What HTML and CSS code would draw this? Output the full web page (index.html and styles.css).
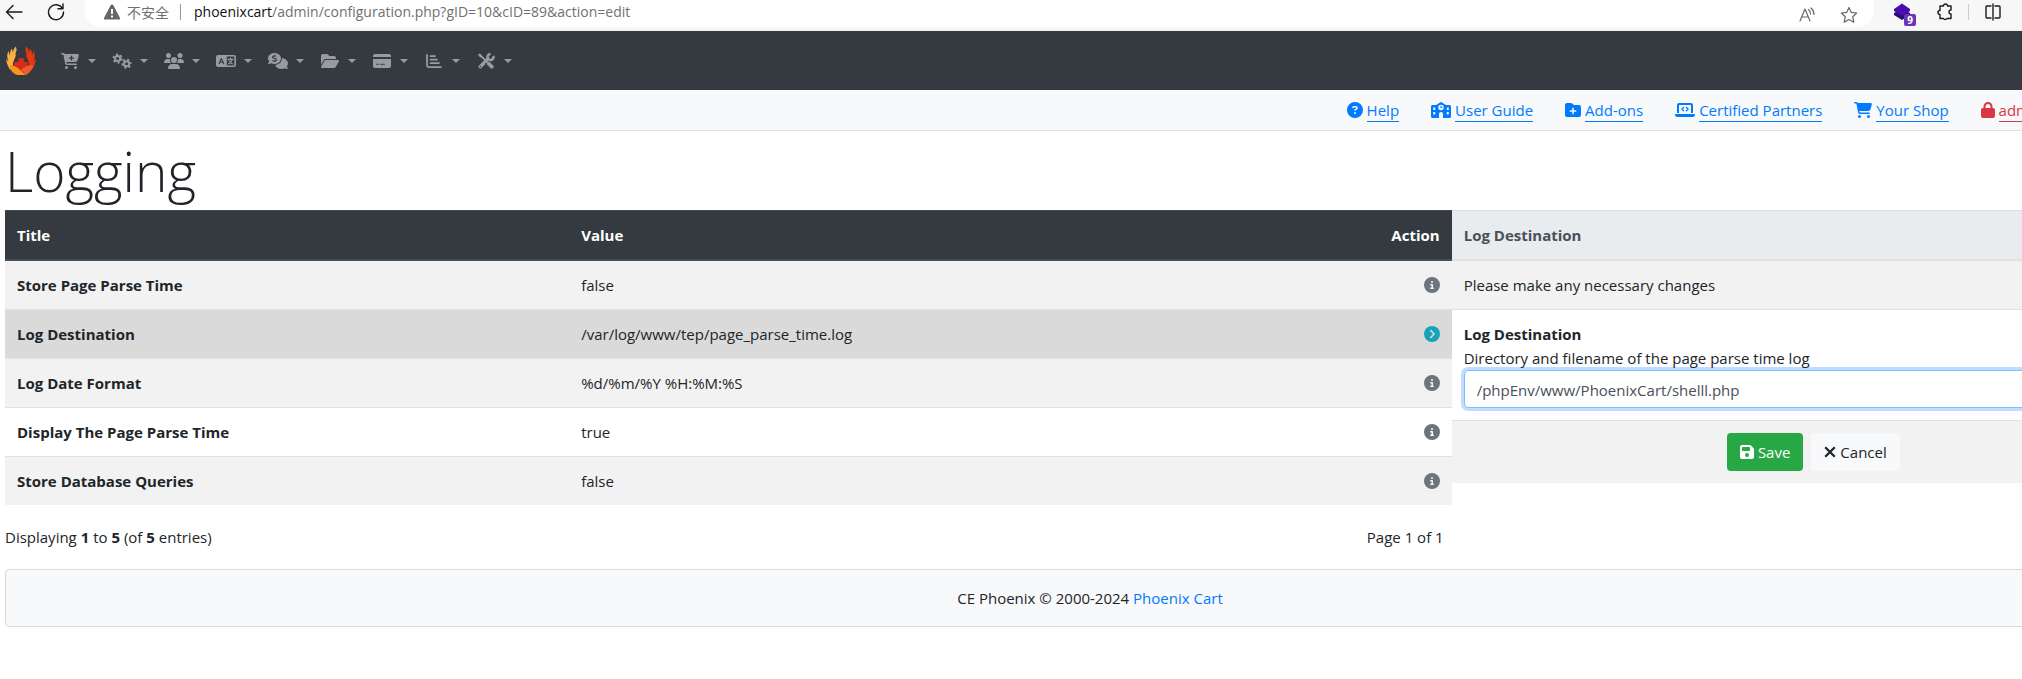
FILE: index.html
```
<!DOCTYPE html>
<html lang="en">
<head>
<meta charset="utf-8">
<title>Logging</title>
<link rel="stylesheet" href="styles.css">
</head>
<body>
<svg class="sprite" aria-hidden="true">
  <symbol id="cart" viewBox="0 0 576 512"><path d="M0 24C0 10.7 10.7 0 24 0H69.5c22 0 41.5 12.8 50.6 32h411c26.300 0 45.500 25 38.600 50.400l-41 152.300c-8.500 31.400-37 53.300-69.500 53.300H170.700l5.400 28.500c2.200 11.300 12.100 19.500 23.600 19.500H488c13.300 0 24 10.700 24 24s-10.700 24-24 24H199.700c-34.600 0-64.300-24.600-70.700-58.500L77.400 54.500c-.7-3.800-4-6.500-7.900-6.500H24C10.700 48 0 37.300 0 24zM128 464a48 48 0 1 1 96 0 48 48 0 1 1-96 0zm336-48a48 48 0 1 1 0 96 48 48 0 1 1 0-96z"/></symbol>
  <symbol id="cart-plus" viewBox="0 0 576 512"><path fill-rule="evenodd" d="M0 24C0 10.7 10.7 0 24 0H69.500c22 0 41.500 12.800 50.600 32h411c26.300 0 45.500 25 38.600 50.400l-41 152.300c-8.500 31.400-37 53.300-69.500 53.300H170.700l5.400 28.500c2.200 11.300 12.100 19.500 23.600 19.500H488c13.300 0 24 10.700 24 24s-10.700 24-24 24H199.700c-34.600 0-64.300-24.600-70.700-58.500L77.400 54.500c-.7-3.800-4-6.500-7.900-6.500H24C10.700 48 0 37.300 0 24zM128 464a48 48 0 1 1 96 0 48 48 0 1 1-96 0zm336-48a48 48 0 1 1 0 96 48 48 0 1 1 0-96zM252 160c0 11 9 20 20 20h44v44c0 11 9 20 20 20s20-9 20-20V180h44c11 0 20-9 20-20s-9-20-20-20H356V96c0-11-9-20-20-20s-20 9-20 20v44H272c-11 0-20 9-20 20z"/></symbol>
  <symbol id="gears" viewBox="0 0 640 512">
    <g fill="none" stroke="currentColor"><circle cx="180" cy="176" r="82" stroke-width="64"/><circle cx="180" cy="176" r="136" stroke-width="56" stroke-dasharray="71 71.400"/><circle cx="468" cy="344" r="82" stroke-width="64"/><circle cx="468" cy="344" r="136" stroke-width="56" stroke-dasharray="71 71.400" stroke-dashoffset="70"/></g></symbol>
  <symbol id="users" viewBox="0 0 640 512"><path d="M144 0a80 80 0 1 1 0 160A80 80 0 1 1 144 0zM512 0a80 80 0 1 1 0 160A80 80 0 1 1 512 0zM0 298.700C0 239.800 47.800 192 106.700 192h42.700c15.900 0 31 3.500 44.600 9.700c-1.300 7.200-1.900 14.700-1.900 22.300c0 38.200 16.800 72.500 43.300 96H21.300C9.600 320 0 310.400 0 298.700zM405.300 320c26-23.500 42.700-57.800 42.700-96c0-7.600-.7-15-1.900-22.300c13.600-6.300 28.700-9.700 44.600-9.700h42.700C592.200 192 640 239.800 640 298.700c0 11.800-9.600 21.300-21.300 21.300H405.300zM224 224a96 96 0 1 1 192 0 96 96 0 1 1-192 0zM128 485.300C128 411.700 187.700 352 261.300 352H378.700C452.300 352 512 411.700 512 485.300c0 14.700-11.900 26.700-26.700 26.700H154.700c-14.700 0-26.700-11.900-26.700-26.700z"/></symbol>
  <symbol id="language" viewBox="0 0 640 512"><path fill-rule="evenodd" d="M64 64H576a64 64 0 0 1 64 64V384a64 64 0 0 1-64 64H64a64 64 0 0 1-64-64V128A64 64 0 0 1 64 64zM344 112V400H560a28 28 0 0 0 28-28V140a28 28 0 0 0-28-28z"/><g fill="none" stroke="#343a40" stroke-width="36" stroke-linecap="round" stroke-linejoin="round"><path d="M96 344L172 176L248 344M124 296H220"/></g><g fill="none" stroke="currentColor" stroke-width="36" stroke-linecap="round"><path d="M384 204H548M466 164V204M516 212C500 284 450 328 400 350M420 256C446 306 490 336 532 350"/></g></symbol>
  <symbol id="comments" viewBox="0 0 640 512"><path fill-rule="evenodd" d="M208 0C323 0 416 79 416 176S323 352 208 352c-38 0-74-9-105-24C78 342 48 352 16 352c-14 0-21-16-12-27 18-20 29-43 35-63C14 236 0 207 0 176C0 79 93 0 208 0zM190 54v24c-34 5-58 26-58 56c0 66 116 44 116 84c0 26-50 30-104 6l-12 34c18 8 38 13 58 15v25h36v-25c38-5 62-26 62-59c0-70-116-48-116-82c0-26 48-26 88-10l12-34c-14-5-29-9-46-11V54z"/><path d="M448 176c0 112-99 197-216 208c24 76 106 128 200 128c38 0 74-9 105-24c25 14 55 24 87 24c14 0 21-16 12-27c-18-20-29-43-35-63c25-26 39-55 39-86c0-86-80-158-193-175q1 8 1 15z"/></symbol>
  <symbol id="folder-open" viewBox="0 0 576 512"><path d="M88.700 223.800L0 375.800V96C0 60.700 28.700 32 64 32H181.500c17 0 33.300 6.700 45.300 18.700l26.500 26.500c12 12 28.300 18.700 45.300 18.700H416c35.300 0 64 28.700 64 64v32H144c-22.800 0-43.800 12.100-55.300 31.800zm27.600 16.100C122.100 230 132.600 224 144 224H544c11.500 0 22 6.100 27.700 16.100s5.700 22.200-.1 32.100l-112 192C453.900 474 443.400 480 432 480H32c-11.500 0-22-6.100-27.700-16.100s-5.700-22.200 .1-32.100l112-192z"/></symbol>
  <symbol id="card" viewBox="0 0 576 512"><path d="M64 32C28.700 32 0 60.700 0 96v32H576V96c0-35.300-28.700-64-64-64H64zM576 192H0V416c0 35.300 28.700 64 64 64H512c35.300 0 64-28.700 64-64V192zM112 344h64c8.800 0 16 7.200 16 16s-7.200 16-16 16H112c-8.800 0-16-7.200-16-16s7.200-16 16-16zm112 16c0-8.800 7.200-16 16-16H368c8.800 0 16 7.200 16 16s-7.200 16-16 16H240c-8.800 0-16-7.200-16-16z"/></symbol>
  <symbol id="chart" viewBox="0 0 512 512"><path fill="none" stroke="currentColor" stroke-width="56" stroke-linecap="round" stroke-linejoin="round" d="M32 60V400Q32 448 80 448H480M144 96H288M144 208H352M144 320H416"/></symbol>
  <symbol id="tools" viewBox="0 0 512 512"><g fill="none" stroke="currentColor"><path stroke-width="112" stroke-linecap="round" d="M72 440L310 202"/><path stroke-width="84" d="M490 96A96 96 0 1 1 400 34"/><path stroke-width="60" stroke-linecap="round" d="M70 70L270 270"/><path stroke-width="120" stroke-linecap="round" d="M340 340L440 440"/><path stroke-width="70" stroke-linecap="round" d="M44 56L90 110"/></g><path stroke="#343a40" stroke-width="26" d="M224 318L300 394"/><circle cx="76" cy="436" r="22" fill="#343a40"/></symbol>
  <symbol id="question" viewBox="0 0 512 512"><path fill-rule="evenodd" d="M256 512A256 256 0 1 0 256 0a256 256 0 1 0 0 512zM169.800 165.300c7.900-22.300 29.100-37.300 52.800-37.300h58.300c34.900 0 63.100 28.300 63.100 63.100c0 22.600-12.100 43.500-31.700 54.800L280 264.400c-.2 13-10.900 23.600-24 23.600c-13.300 0-24-10.700-24-24V250.500c0-8.600 4.600-16.500 12.100-20.800l44.300-25.400c4.700-2.700 7.600-7.700 7.600-13.100c0-8.400-6.800-15.100-15.100-15.100H222.600c-3.400 0-6.400 2.100-7.500 5.300l-.4 1.200c-4.400 12.500-18.200 19-30.600 14.600s-19-18.200-14.600-30.600zM224 352a32 32 0 1 1 64 0 32 32 0 1 1-64 0z"/></symbol>
  <symbol id="info" viewBox="0 0 512 512"><path fill-rule="evenodd" d="M256 512A256 256 0 1 0 256 0a256 256 0 1 0 0 512zM216 336h24V272H216c-13.300 0-24-10.700-24-24s10.700-24 24-24h48c13.300 0 24 10.700 24 24v88h8c13.300 0 24 10.700 24 24s-10.700 24-24 24H216c-13.300 0-24-10.700-24-24s10.700-24 24-24zm40-208a32 32 0 1 1 0 64 32 32 0 1 1 0-64z"/></symbol>
  <symbol id="chevron" viewBox="0 0 512 512"><circle cx="256" cy="256" r="256"/><path fill="none" stroke="#dadada" stroke-width="52" stroke-linecap="round" stroke-linejoin="round" d="M218 150L324 256L218 362"/></symbol>
  <symbol id="school" viewBox="0 0 640 512"><path fill-rule="evenodd" d="M302 6a32 32 0 0 1 36 0L474 96H592a48 48 0 0 1 48 48V464a48 48 0 0 1-48 48H384V384a64 64 0 0 0-128 0V512H48a48 48 0 0 1-48-48V144a48 48 0 0 1 48-48H166zM72 176v80h64v-80zm0 144v80h64v-80zM504 176v80h64v-80zm0 144v80h64v-80zM320 88a88 88 0 1 0 0 176a88 88 0 1 0 0-176zM304 120h32v44h36v30h-68z"/></symbol>
  <symbol id="folder-plus" viewBox="0 0 512 512"><path fill-rule="evenodd" d="M512 416c0 35.300-28.700 64-64 64H64c-35.300 0-64-28.700-64-64V96C0 60.700 28.700 32 64 32H192c20.100 0 39.100 9.500 51.200 25.600l19.200 25.600c6 8.100 15.500 12.800 25.600 12.800H448c35.300 0 64 28.700 64 64V416zM232 376c0 13.300 10.700 24 24 24s24-10.700 24-24V312h64c13.300 0 24-10.700 24-24s-10.700-24-24-24H280V200c0-13.300-10.700-24-24-24s-24 10.700-24 24v64H168c-13.300 0-24 10.700-24 24s10.700 24 24 24h64v64z"/></symbol>
  <symbol id="laptop" viewBox="0 0 640 512"><path fill-rule="evenodd" d="M128 32H512a64 64 0 0 1 64 64V352H512V96H128V352H64V96A64 64 0 0 1 128 32zM20 384H620a20 20 0 0 1 20 20a76 76 0 0 1-76 76H76a76 76 0 0 1-76-76a20 20 0 0 1 20-20z"/><path fill="none" stroke="currentColor" stroke-width="44" stroke-linecap="round" stroke-linejoin="round" d="M274 174L222 226L274 278M366 174L418 226L366 278"/></symbol>
  <symbol id="lock" viewBox="0 0 448 512"><path fill-rule="evenodd" d="M144 144v48H304V144c0-44.200-35.800-80-80-80s-80 35.800-80 80zM80 192V144C80 64.500 144.500 0 224 0s144 64.500 144 144v48h16c35.300 0 64 28.700 64 64V448c0 35.300-28.700 64-64 64H64c-35.300 0-64-28.700-64-64V256c0-35.300 28.700-64 64-64H80z"/></symbol>
  <symbol id="floppy" viewBox="0 0 448 512"><path fill-rule="evenodd" d="M64 32C28.700 32 0 60.700 0 96V416c0 35.300 28.700 64 64 64H384c35.300 0 64-28.700 64-64V173.300c0-17-6.700-33.300-18.700-45.300L352 50.700C340 38.700 323.700 32 306.700 32H64zm0 96c0-17.700 14.300-32 32-32H288c17.700 0 32 14.300 32 32v64c0 17.700-14.300 32-32 32H96c-17.700 0-32-14.300-32-32V128zM224 288a64 64 0 1 1 0 128 64 64 0 1 1 0-128z"/></symbol>
  <symbol id="xmark" viewBox="0 0 384 512"><path stroke="currentColor" stroke-width="76" d="M40 104L344 408M344 104L40 408"/></symbol>
</svg>

<header class="browser">
  <button class="tool" aria-label="Back"><svg viewBox="0 0 18 18" width="18" height="18"><path class="line" d="M17 9H1.500M8 2.500L1.500 9L8 15.500"/></svg></button>
  <button class="tool" aria-label="Reload"><svg viewBox="0 0 18 18" width="18" height="18"><path class="line" d="M15.500 5.500A7.500 7.500 0 1 0 16.500 9M16 1V5.800H11"/></svg></button>
  <div class="address">
    <svg class="warn" viewBox="0 0 18 16" width="18" height="16"><path d="M9 0.500Q10 0.500 10.500 1.500L17 14Q17.500 15.500 16 15.500H2Q0.500 15.500 1 14L7.500 1.500Q8 0.500 9 0.500z"/><path stroke="#fff" stroke-width="2" d="M9 5V10M9 11.500V13.500"/></svg>
    <span class="insecure" lang="zh">不安全</span>
    <span class="bar"></span>
    <span class="url"><span class="host">phoenixcart</span>/admin/configuration.php?gID=10&amp;cID=89&amp;action=edit</span>
    <button class="tool" aria-label="Read aloud"><svg viewBox="0 0 18 18" width="18" height="18"><path class="thin" d="M2 15L7 3L12 15M4 11H10M10.500 3.500Q12.500 5 12.500 8M13 2Q16 4.500 16 8.500"/></svg></button>
    <button class="tool" aria-label="Favorite"><svg viewBox="0 0 18 18" width="18" height="18"><path class="thin" d="M9 1.500L11.300 6.400L16.700 7L12.700 10.700L13.800 16.200L9 13.500L4.200 16.200L5.300 10.700L1.300 7L6.700 6.400z"/></svg></button>
  </div>
  <button class="tool ext" aria-label="Extension"><svg viewBox="0 0 22 22" width="22" height="22"><path fill="#2d0a75" d="M0 10L8 6L16 10V12L8 17L0 12z"/><path fill="#4a0db0" d="M8 0.500L16 6V8L8 13L0 8V6z"/></svg><span class="badge">9</span></button>
  <button class="tool" aria-label="Extensions"><svg viewBox="0 0 18 18" width="18" height="18"><path class="line" d="M4 3H7.500A2 2 0 0 1 11.500 3H15V7A2 2 0 0 0 15 11V15.500H11A2 2 0 0 1 7.500 15.500H4V11.500A2 2 0 0 1 4 7.500z"/></svg></button>
  <span class="bar pale"></span>
  <button class="tool" aria-label="Split screen"><svg viewBox="0 0 18 18" width="18" height="18"><path class="line" d="M7 3H3Q2 3 2 4V14Q2 15 3 15H7M9 1V17M11 3H15Q16 3 16 4V14Q16 15 15 15H11"/></svg></button>
</header>

<div class="page">
  <nav class="menu" aria-label="Admin">
    <a class="brand" href="#" aria-label="Phoenix Cart"><svg viewBox="0 0 30 30" width="30" height="30">
      <path fill="#fbb040" d="M10 0.500Q11.500 4 9.500 7.500Q10.500 10 8.500 13Q6 17 7 21L4.500 24Q1.500 21 0 13L2.500 15.500Q0 10 2.500 5L4 10Q3.500 5 6 2.500L7 7Q7 3 10 0.500z"/>
      <path fill="#e8380d" d="M20 0.500Q18.500 4 20.500 7.500Q19.500 10 21.500 13Q24 17 23 21L25.500 24Q28.500 21 30 13L27.500 15.500Q30 10 27.500 5L26 10Q26.500 5 24 2.500L23 7Q23 3 20 0.500z"/>
      <path fill="#d92b1c" d="M12 14Q13.500 11 17 12L19 14L17 14.500Q18 17 22 16L22 21L15 26L8 21V16Q12 17 13 14.500z"/>
      <path fill="#f7941d" d="M3 19Q9 19 14 24L20 29H11Q5 27 3 19z"/>
      <path fill="#f15a29" d="M27 19Q20 19 15 24L20 29Q26 26 27 19z"/></svg></a>
    <button class="drop" aria-label="Catalog"><svg class="icon"><use href="#cart-plus"/></svg></button>
    <button class="drop" aria-label="Configuration"><svg class="icon"><use href="#gears"/></svg></button>
    <button class="drop" aria-label="Customers"><svg class="icon"><use href="#users"/></svg></button>
    <button class="drop" aria-label="Localization"><svg class="icon"><use href="#language"/></svg></button>
    <button class="drop" aria-label="Orders"><svg class="icon"><use href="#comments"/></svg></button>
    <button class="drop" aria-label="Modules"><svg class="icon"><use href="#folder-open"/></svg></button>
    <button class="drop" aria-label="Payment"><svg class="icon"><use href="#card"/></svg></button>
    <button class="drop" aria-label="Reports"><svg class="icon"><use href="#chart"/></svg></button>
    <button class="drop" aria-label="Tools"><svg class="icon"><use href="#tools"/></svg></button>
  </nav>

  <nav class="links" aria-label="Help">
    <a href="#"><svg class="w16"><use href="#question"/></svg><span>Help</span></a>
    <a href="#"><svg class="w20"><use href="#school"/></svg><span>User Guide</span></a>
    <a href="#"><svg class="w16"><use href="#folder-plus"/></svg><span>Add-ons</span></a>
    <a href="#"><svg class="w20"><use href="#laptop"/></svg><span>Certified Partners</span></a>
    <a href="#"><svg class="w18"><use href="#cart"/></svg><span>Your Shop</span></a>
    <a class="danger" href="#"><svg class="w14"><use href="#lock"/></svg><span>admin</span></a>
  </nav>

  <main class="content">
    <h1>Logging</h1>
    <div class="row">
      <section class="list">
        <table>
          <thead><tr><th class="title">Title</th><th>Value</th><th class="action">Action</th></tr></thead>
          <tbody>
            <tr class="odd"><th scope="row">Store Page Parse Time</th><td>false</td><td class="action"><a href="#" aria-label="Info"><svg class="w16"><use href="#info"/></svg></a></td></tr>
            <tr class="active"><th scope="row">Log Destination</th><td>/var/log/www/tep/page_parse_time.log</td><td class="action"><a class="current" href="#" aria-label="Selected"><svg class="w16"><use href="#chevron"/></svg></a></td></tr>
            <tr class="odd"><th scope="row">Log Date Format</th><td>%d/%m/%Y %H:%M:%S</td><td class="action"><a href="#" aria-label="Info"><svg class="w16"><use href="#info"/></svg></a></td></tr>
            <tr><th scope="row">Display The Page Parse Time</th><td>true</td><td class="action"><a href="#" aria-label="Info"><svg class="w16"><use href="#info"/></svg></a></td></tr>
            <tr class="odd"><th scope="row">Store Database Queries</th><td>false</td><td class="action"><a href="#" aria-label="Info"><svg class="w16"><use href="#info"/></svg></a></td></tr>
          </tbody>
        </table>
        <div class="pager"><span>Displaying <b>1</b> to <b>5</b> (of <b>5</b> entries)</span><span>Page 1 of 1</span></div>
      </section>
      <form class="panel">
        <h2>Log Destination</h2>
        <p class="note">Please make any necessary changes</p>
        <div class="field">
          <label for="value"><b>Log Destination</b><br>Directory and filename of the page parse time log</label>
          <input id="value" type="text" value="/phpEnv/www/PhoenixCart/shelll.php">
        </div>
        <div class="buttons">
          <button class="btn save" type="button"><svg class="w14"><use href="#floppy"/></svg>Save</button>
          <button class="btn cancel" type="button"><svg class="w12"><use href="#xmark"/></svg>Cancel</button>
        </div>
      </form>
    </div>
    <footer class="footer">CE Phoenix © 2000-2024 <a href="#">Phoenix Cart</a></footer>
  </main>
</div>
</body>
</html>
```
FILE: styles.css
```
* { box-sizing: border-box; }
body {
  margin: 0;
  overflow: hidden;
  background: #fff;
  color: #212529;
  font: 15px/24px "Open Sans", "Noto Sans", "Noto Sans CJK SC", sans-serif;
}
svg { display: block; fill: currentColor; flex: none; }
button { border: 0; background: none; padding: 0; font: inherit; color: inherit; }
.sprite { position: absolute; width: 0; height: 0; }

.w12 { width: 12px; height: 16px; }
.w14 { width: 14px; height: 16px; }
.w16 { width: 16px; height: 16px; }
.w18 { width: 18px; height: 16px; }
.w20 { width: 20px; height: 16px; }

/* Browser toolbar */
.browser {
  display: flex;
  align-items: flex-start;
  height: 31px;
  padding: 0 20px 0 5px;
  background: #f7f7f7;
  border-bottom: 1px solid #ececec;
}
.tool { padding-top: 3px; color: #1b1b1b; }
.tool + .tool { margin-left: 24px; }
.line, .thin { fill: none; stroke: currentColor; stroke-width: 1.4; stroke-linejoin: round; stroke-linecap: round; }
.thin { stroke: #666; stroke-width: 1.2; }
.address {
  display: flex;
  flex: 1;
  height: 27px;
  margin: 0 20px 0 20px;
  padding: 0 16px 0 18px;
  background: #fff;
  border-radius: 0 0 16px 16px;
  font-size: 14px;
  color: #707070;
}
.warn { margin: 4px 6px 0 0; fill: #666; }
.insecure { font-family: "Noto Sans CJK SC", sans-serif; }
.bar { width: 1px; height: 16px; margin: 4px 13px 0 11px; background: #999; }
.pale { margin: 4px 15px 0 14px; background: #ccc; }
.url { flex: 1; }
.host { color: #111; }
.ext { position: relative; }
.tool.ext + .tool { margin-left: 20px; }
.badge {
  position: absolute;
  left: 10px;
  top: 14px;
  width: 12px;
  height: 12px;
  border-radius: 2px;
  background: #6b35b8;
  color: #fff;
  font: bold 10px/12px "Open Sans", sans-serif;
}

/* Admin page */
.page { width: calc(100vw + 158px); }
.menu {
  display: flex;
  align-items: center;
  height: 59px;
  padding-left: 6px;
  background: #343a40;
  color: #999c9f;
}
.brand { margin-right: 16px; }
.drop { display: flex; align-items: center; gap: 8px; padding: 8px; }
.drop::after { content: ""; border: 4px solid transparent; border-top-color: currentColor; border-bottom: 0; }
.icon { width: 20px; height: 16px; }

.links {
  display: flex;
  justify-content: flex-end;
  gap: 32px;
  padding: 8px 137px 8px 0;
  background: #f8f9fa;
  border-bottom: 1px solid #dee2e6;
}
a { color: #007bff; text-decoration: none; }
.links a { display: flex; gap: 4px; height: 24px; padding-top: 1px; align-items: flex-start; }
.links svg { margin-top: 3px; }
.links span { line-height: 22px; border-bottom: 1px solid; }
.links .danger { color: #dc3545; }

.content { padding: 8px 5px 0; }
h1 { margin: 0 0 7px; font-size: 55px; line-height: 64px; font-weight: 300; }
.row { display: grid; grid-template-columns: 2fr 1fr; }
table { width: 100%; border-collapse: separate; border-spacing: 0; }
th, td { padding: 12px; text-align: left; border-top: 1px solid #dee2e6; }
thead th { background: #343a40; color: #fff; border-top: 1px solid #454d55; border-bottom: 2px solid #454d55; }
tbody tr:first-child > * { border-top: 0; }
.title { width: 39%; }
.odd { background: #f2f2f2; }
.active { background: #dadada; }
.action { text-align: right; }
.action svg { margin: 4px 0 4px auto; }
.action a { color: #6c757d; }
.action .current { color: #17a2b8; }
.pager { display: flex; justify-content: space-between; padding: 20px 8px 20px 0; }

.panel h2 {
  margin: 0;
  padding: 12px;
  background: #e9ecef;
  color: #495057;
  font-size: 15px;
  line-height: 24px;
  border-top: 1px solid #dee2e6;
  border-bottom: 2px solid #dee2e6;
}
.note { margin: 0; padding: 12px; background: #f2f2f2; }
.field { padding: 12px; border-top: 1px solid #dee2e6; }
.field label { display: block; }
.field input {
  display: block;
  width: 100%;
  height: 38px;
  padding: 8px 12px 6px;
  border: 1px solid #80bdff;
  border-radius: 4px;
  background: #fff;
  color: #495057;
  font: inherit;
  box-shadow: 0 0 0 3px #bfdeff;
}
.buttons { display: flex; justify-content: center; gap: 8px; padding: 12px; background: #f2f2f2; border-top: 1px solid #dee2e6; }
.btn { display: flex; align-items: center; gap: 4px; height: 38px; padding: 0 13px; border-radius: 4px; }
.save { background: #28a745; color: #fff; }
.cancel { background: #f8f9fa; }
.footer { padding: 16px; border: 1px solid #d8dbde; border-radius: 4px; background: #f8f9fa; text-align: center; }
```
